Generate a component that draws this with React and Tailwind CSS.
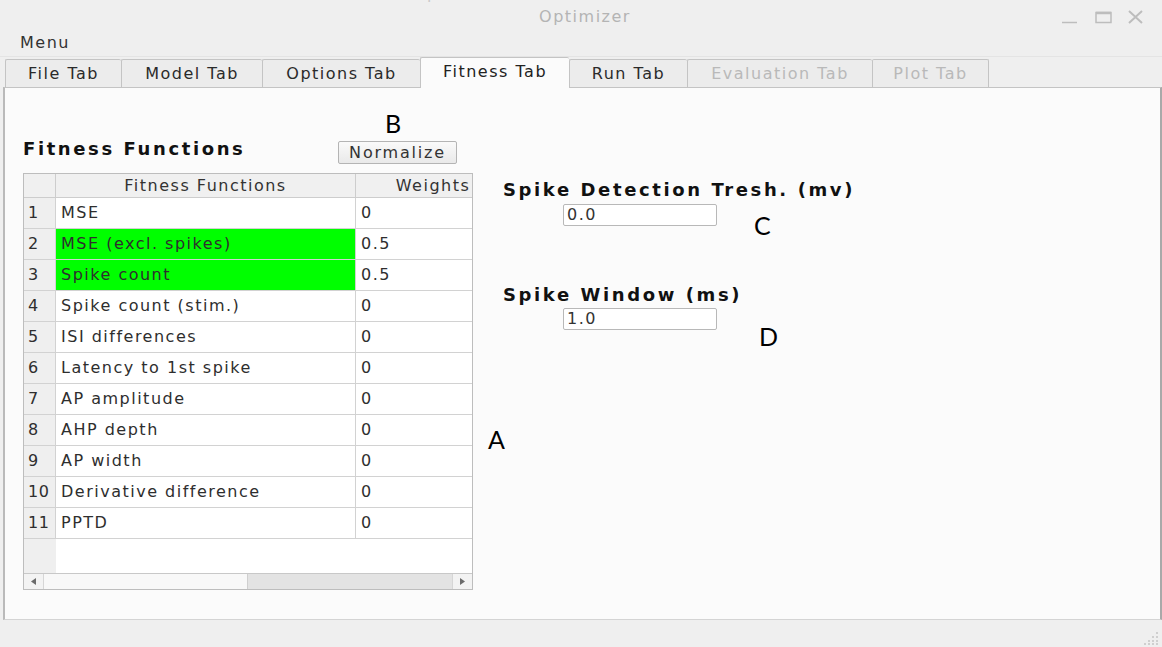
import React from 'react';

const rows = [
  ['MSE', '0', false],
  ['MSE (excl. spikes)', '0.5', true],
  ['Spike count', '0.5', true],
  ['Spike count (stim.)', '0', false],
  ['ISI differences', '0', false],
  ['Latency to 1st spike', '0', false],
  ['AP amplitude', '0', false],
  ['AHP depth', '0', false],
  ['AP width', '0', false],
  ['Derivative difference', '0', false],
  ['PPTD', '0', false],
];

const tabs = [
  { label: 'File Tab', w: 'w-[116px]' },
  { label: 'Model Tab', w: 'w-[141px]' },
  { label: 'Options Tab', w: 'w-[158px]' },
  { label: 'Fitness Tab', w: 'w-[149px]', active: true },
  { label: 'Run Tab', w: 'w-[118px]' },
  { label: 'Evaluation Tab', w: 'w-[185px]', disabled: true },
  { label: 'Plot Tab', w: 'w-[117px]', disabled: true, last: true },
];

// menu items of the window behind, only their lower edge shows
const behind = [
  ['rm', 'ml-[0px]'],
  ['Chain Mode', 'ml-[22px]'],
  ['Tools', 'ml-[18px]'],
  ['Edit', 'ml-[20px]'],
  ['Window', 'ml-[22px]'],
  ['Help', 'ml-[24px]'],
];

const WindowButtons = () => (
  <svg width="90" height="20" viewBox="0 0 90 20" className="mr-[14px]">
    <line x1="4" y1="16.5" x2="19" y2="16.5" stroke="#bdbdbd" strokeWidth="1.5" />
    <rect x="38" y="6.5" width="15" height="10" fill="none" stroke="#bdbdbd" strokeWidth="1.5" />
    <line x1="38" y1="7" x2="53" y2="7" stroke="#bdbdbd" strokeWidth="2.5" />
    <path d="M71 5 L84 17 M84 5 L71 17" stroke="#bdbdbd" strokeWidth="2" />
  </svg>
);

const Grip = () => (
  <svg width="16" height="14" viewBox="0 0 16 14">
    {[
      [13, 1], [13, 5], [9, 5], [13, 9], [9, 9], [5, 9], [13, 12], [9, 12], [5, 12], [1, 12],
    ].map(([x, y], i) => (
      <rect key={i} x={x} y={y} width="2" height="2" fill="#cfcfcf" />
    ))}
  </svg>
);

const FitnessTable = () => (
  <div className="mt-[9px] w-[450px] h-[417px] border border-[#bdbdbd] bg-white flex flex-col">
    <div className="flex-1 overflow-hidden flex flex-col">
      <div className="w-[486px] flex h-[24px] shrink-0 bg-[#f0f0f0] border-b border-[#cdcdcd] text-[#333]">
        <div className="w-[32px] border-r border-[#cdcdcd]" />
        <div className="w-[300px] border-r border-[#cdcdcd] flex items-center justify-center">Fitness Functions</div>
        <div className="w-[154px] flex items-center justify-center">Weights</div>
      </div>
      {rows.map(([name, weight, green], i) => (
        <div key={name} className="w-[486px] flex h-[31px] shrink-0 text-[#2e2e2e]">
          <div className="w-[32px] bg-[#efefef] border-r border-b border-[#d2d2d2] flex items-center pl-[4px] tracking-[0.5px]">
            {i + 1}
          </div>
          <div
            className={
              green
                ? 'w-[300px] bg-[#00ff00] border-r border-b border-[#d2d2d2] flex items-center pl-[5px]'
                : 'w-[300px] border-r border-b border-[#d2d2d2] flex items-center pl-[5px]'
            }
          >
            {name}
          </div>
          <div className="w-[154px] border-b border-[#d2d2d2] flex items-center pl-[5px]">{weight}</div>
        </div>
      ))}
      <div className="flex-1 flex">
        <div className="w-[32px] bg-[#efefef]" />
      </div>
    </div>
    <div className="h-[16px] shrink-0 border-t border-[#c8c8c8] flex bg-[#f3f3f3]">
      <div className="w-[20px] flex items-center justify-center border-r border-[#d6d6d6]">
        <svg width="6" height="7" viewBox="0 0 6 7"><path d="M5 0 L0 3.5 L5 7 Z" fill="#6b6b6b" /></svg>
      </div>
      <div className="w-[204px] bg-[#f8f8f8] border-r border-[#cfcfcf]" />
      <div className="flex-1 bg-[#e3e3e3]" />
      <div className="w-[20px] flex items-center justify-center border-l border-[#d6d6d6]">
        <svg width="6" height="7" viewBox="0 0 6 7"><path d="M0 0 L5 3.5 L0 7 Z" fill="#6b6b6b" /></svg>
      </div>
    </div>
  </div>
);

export default function App() {
  return (
    <div className="w-[1162px] h-[647px] bg-[#efefef] overflow-hidden flex flex-col font-['DejaVu_Sans',sans-serif] text-[16px] tracking-[1.5px] text-[#2e2e2e]">
      {/* title bar */}
      <div className="h-[30px] shrink-0 flex flex-col">
        <div className="h-[2px] overflow-hidden">
          <div className="-mt-[14px] flex whitespace-nowrap text-[#cacaca] leading-[18px]">
            {behind.map(([t, m]) => (
              <span key={t} className={m}>{t}</span>
            ))}
          </div>
        </div>
        <div className="flex-1 relative flex items-center justify-center">
          <span className="text-[#b4b4b4] pl-[8px] pt-[2px]">Optimizer</span>
          <div className="absolute right-0 top-0 h-full flex items-center">
            <WindowButtons />
          </div>
        </div>
      </div>

      {/* menu bar */}
      <div className="h-[27px] shrink-0 flex items-center pl-[20px] border-b border-[#e4e4e4]">
        <span className="text-[#333]">Menu</span>
      </div>

      {/* tabs */}
      <div className="h-[30px] shrink-0 flex items-end pl-[5px] relative z-10">
        {tabs.map((t) => {
          const base = `${t.w} flex items-center justify-center border-t border-l border-[#c4c4c4] rounded-t-[2px]`;
          if (t.active) {
            return (
              <div key={t.label} className={`${base} h-[31px] -mb-px bg-[#fbfbfb] text-[#222] pb-[3px]`}>
                {t.label}
              </div>
            );
          }
          return (
            <div
              key={t.label}
              className={`${base} h-[28px] bg-[#ececec] ${t.last ? 'border-r' : ''} ${
                t.disabled ? 'text-[#b9b9b9]' : 'text-[#2a2a2a]'
              }`}
            >
              {t.label}
            </div>
          );
        })}
      </div>

      {/* panel */}
      <div className="h-[533px] shrink-0 ml-[3px] w-[1159px] bg-[#fbfbfb] border-t border-l-2 border-r-2 border-b border-t-[#c4c4c4] border-l-[#bababa] border-r-[#a9a9a9] border-b-[#d4d4d4] relative flex pl-[18px]">
        <div className="flex flex-col w-[450px] pt-[50px]">
          <div className="flex items-start justify-between">
            <span className="font-bold text-[18px] tracking-[2.6px] leading-[21px] text-[#111]">Fitness Functions</span>
            <button className="mt-[3px] mr-[16px] w-[119px] h-[23px] border border-[#b4b4b4] rounded-[2px] bg-gradient-to-b from-[#fafafa] to-[#e9e9e9] text-[#333] flex items-center justify-center tracking-[1.8px]">
              Normalize
            </button>
          </div>
          <FitnessTable />
        </div>

        <div className="flex flex-col ml-[30px] pt-[91px]">
          <span className="font-bold text-[18px] tracking-[2.6px] leading-[21px] text-[#111]">Spike Detection Tresh. (mv)</span>
          <input
            readOnly
            value="0.0"
            className="mt-[4px] ml-[60px] w-[154px] h-[22px] border border-[#b8b8b8] rounded-[2px] bg-white pl-[3px] text-[#333] tracking-[1.5px] outline-none"
          />
          <span className="mt-[58px] font-bold text-[18px] tracking-[2.6px] leading-[21px] text-[#111]">Spike Window (ms)</span>
          <input
            readOnly
            value="1.0"
            className="mt-[3px] ml-[60px] w-[154px] h-[22px] border border-[#b8b8b8] rounded-[2px] bg-white pl-[3px] text-[#333] tracking-[1.5px] outline-none"
          />
        </div>

        {/* annotation letters */}
        <span className="absolute left-[380px] top-[23px] font-['Lato',sans-serif] text-[25px] leading-none tracking-normal text-black">B</span>
        <span className="absolute left-[749px] top-[125px] font-['Lato',sans-serif] text-[25px] leading-none tracking-normal text-black">C</span>
        <span className="absolute left-[754px] top-[236px] font-['Lato',sans-serif] text-[25px] leading-none tracking-normal text-black">D</span>
        <span className="absolute left-[483px] top-[339px] font-['Lato',sans-serif] text-[25px] leading-none tracking-normal text-black">A</span>
      </div>

      {/* status bar */}
      <div className="flex-1 flex items-end justify-end pr-[3px] pb-[2px]">
        <Grip />
      </div>
    </div>
  );
}
